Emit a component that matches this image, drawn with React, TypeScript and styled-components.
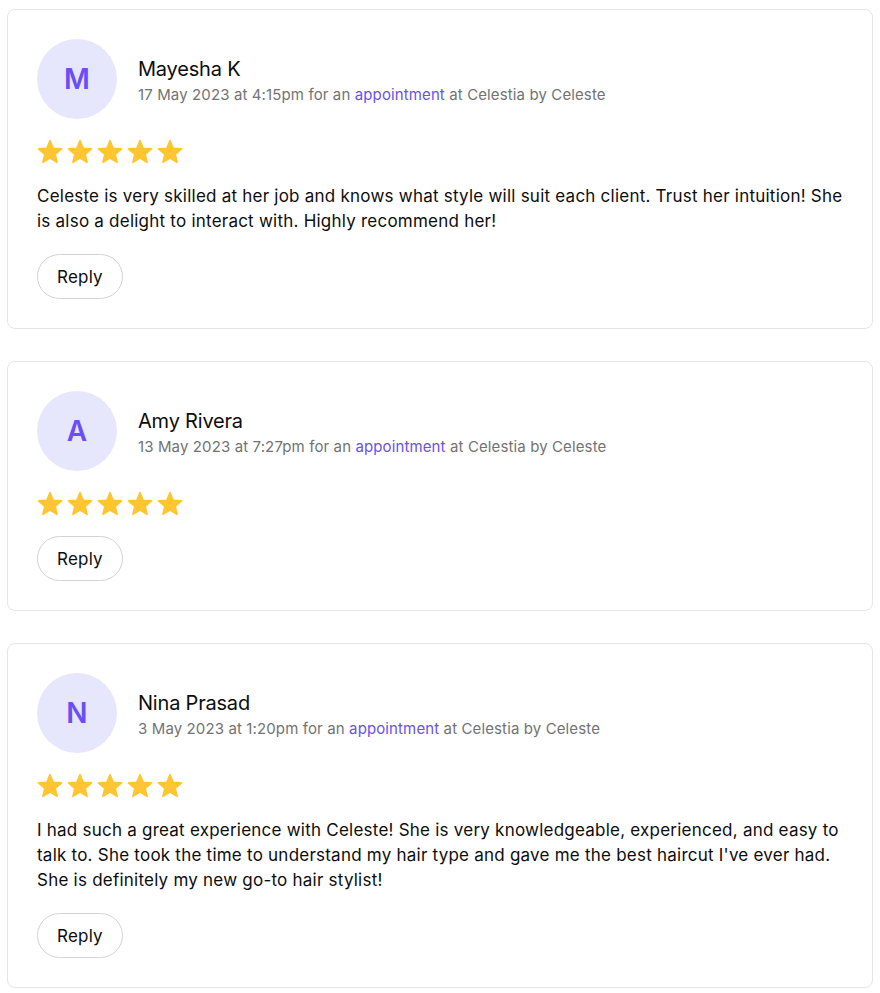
import React from "react";
import styled, { createGlobalStyle } from "styled-components";

const Global = createGlobalStyle`
  html, body { margin: 0; padding: 0; background: #ffffff; }
  body { font-family: Inter, "Noto Sans", "Liberation Sans", sans-serif; color: #0d0d0d; }
`;

const Page = styled.div`
  display: flex;
  flex-direction: column;
  gap: 32px;
  padding: 9px 7px;
`;

const Card = styled.article`
  display: flex;
  flex-direction: column;
  gap: 20px;
  padding: 29px;
  border: 1px solid #e5e5e5;
  border-radius: 8px;
  background: #fff;
`;

const Header = styled.div`
  display: flex;
  align-items: center;
  gap: 21px;
`;

const Avatar = styled.div`
  width: 80px;
  height: 80px;
  border-radius: 50%;
  background: #e6e6fd;
  color: #6b4ef5;
  display: flex;
  align-items: center;
  justify-content: center;
  font-size: 28px;
  font-weight: 600;
  flex-shrink: 0;
`;

const Meta = styled.div`
  display: flex;
  flex-direction: column;
  gap: 3px;
  padding-top: 2px;
`;

const Name = styled.div`
  font-size: 20px;
  line-height: 26px;
  color: #0d0d0d;
  letter-spacing: -0.2px;
`;

const Sub = styled.div`
  font-size: 15px;
  line-height: 20px;
  color: #737373;
  letter-spacing: 0.12px;
`;

const Link = styled.span`
  color: #6950f3;
`;

const Stars = styled.div`
  display: flex;
  gap: 4px;
  height: 25px;
  align-items: center;
`;

const Body = styled.p`
  margin: 0;
  font-size: 17px;
  line-height: 25px;
  color: #0d0d0d;
  letter-spacing: 0.23px;
`;

const Reply = styled.button`
  align-self: flex-start;
  height: 45px;
  width: 86px;
  border: 1px solid #d3d3d3;
  border-radius: 999px;
  background: #fff;
  font-family: inherit;
  font-size: 17px;
  color: #0d0d0d;
  letter-spacing: 0.2px;
  padding: 0;
  cursor: pointer;
`;

const Star = () => (
  <svg width="26" height="25" viewBox="0 0 26 25">
    <polygon
      points="13,1.5 16.2,9.2 24.5,9.9 18.2,15.3 20.1,23.4 13,19.1 5.9,23.4 7.8,15.3 1.5,9.9 9.8,9.2"
      fill="#ffc532"
      stroke="#ffc532"
      strokeWidth="1.6"
      strokeLinejoin="round"
    />
  </svg>
);

type Review = {
  initial: string;
  name: string;
  date: string;
  text?: string;
};

const reviews: Review[] = [
  {
    initial: "M",
    name: "Mayesha K",
    date: "17 May 2023 at 4:15pm",
    text: "Celeste is very skilled at her job and knows what style will suit each client. Trust her intuition! She is also a delight to interact with. Highly recommend her!",
  },
  {
    initial: "A",
    name: "Amy Rivera",
    date: "13 May 2023 at 7:27pm",
  },
  {
    initial: "N",
    name: "Nina Prasad",
    date: "3 May 2023 at 1:20pm",
    text: "I had such a great experience with Celeste! She is very knowledgeable, experienced, and easy to talk to. She took the time to understand my hair type and gave me the best haircut I've ever had. She is definitely my new go-to hair stylist!",
  },
];

export default function App() {
  return (
    <>
      <Global />
      <Page>
        {reviews.map((r) => (
          <Card key={r.name}>
            <Header>
              <Avatar>{r.initial}</Avatar>
              <Meta>
                <Name>{r.name}</Name>
                <Sub>
                  {r.date} for an <Link>appointment</Link> at Celestia by Celeste
                </Sub>
              </Meta>
            </Header>
            <Stars>
              {[0, 1, 2, 3, 4].map((i) => (
                <Star key={i} />
              ))}
            </Stars>
            {r.text && <Body>{r.text}</Body>}
            <Reply>Reply</Reply>
          </Card>
        ))}
      </Page>
    </>
  );
}
